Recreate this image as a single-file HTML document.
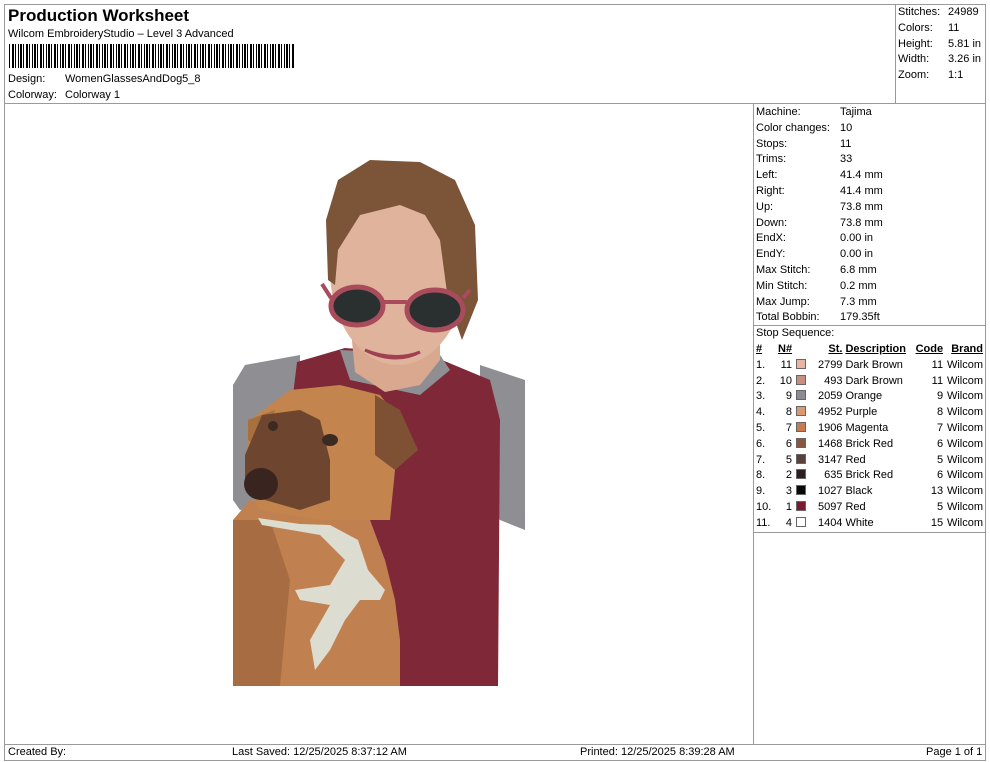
<!DOCTYPE html>
<html><head><meta charset="utf-8"><style>
*{margin:0;padding:0;box-sizing:border-box}
body{width:990px;height:762px;background:#fff;font-family:"Liberation Sans",Arial,sans-serif;font-size:11px;color:#000;position:relative;overflow:hidden}
.a{position:absolute;white-space:nowrap}
.l{position:absolute;background:#9a9a9a}
.t{font-size:17px;font-weight:bold}
table{border-collapse:collapse;font-size:11px}
td{padding:0;height:15.8px;line-height:15.8px;white-space:nowrap}
.sw{display:inline-block;width:10px;height:10px;border:1px solid #666;vertical-align:-1px}
</style></head><body>
<div class="l" style="left:4px;top:4px;width:982px;height:1px"></div>
<div class="l" style="left:4px;top:4px;width:1px;height:757px"></div>
<div class="l" style="left:985px;top:4px;width:1px;height:757px"></div>
<div class="l" style="left:4px;top:103px;width:982px;height:1px"></div>
<div class="l" style="left:895px;top:4px;width:1px;height:100px"></div>
<div class="l" style="left:753px;top:103px;width:1px;height:641px"></div>
<div class="l" style="left:753px;top:325px;width:233px;height:1px"></div>
<div class="l" style="left:753px;top:532px;width:233px;height:1px"></div>
<div class="l" style="left:4px;top:744px;width:982px;height:1px"></div>
<div class="l" style="left:4px;top:760px;width:982px;height:1px"></div>

<div class="a t" style="left:8px;top:6px">Production Worksheet</div>
<div class="a" style="left:8px;top:28px">Wilcom EmbroideryStudio – Level 3 Advanced</div>
<div class="a" style="left:9px;top:44px;width:286px;height:24px;background:repeating-linear-gradient(90deg,#000 0 1px,#fff 1px 3px,#000 3px 5px,#fff 5px 6px,#000 6px 7px,#fff 7px 9px,#000 9px 10px,#fff 10px 11px,#000 11px 13px,#fff 13px 14px)"></div>
<div class="a" style="left:8px;top:73px">Design:</div><div class="a" style="left:65px;top:73px">WomenGlassesAndDog5_8</div>
<div class="a" style="left:8px;top:89px">Colorway:</div><div class="a" style="left:65px;top:89px">Colorway 1</div>

<div class="a" style="left:898px;top:5px;line-height:15.8px">Stitches:<br>Colors:<br>Height:<br>Width:<br>Zoom:</div>
<div class="a" style="left:948px;top:5px;line-height:15.8px">24989<br>11<br>5.81 in<br>3.26 in<br>1:1</div>

<div class="a" style="left:756px;top:105px;line-height:15.8px">Machine:<br>Color changes:<br>Stops:<br>Trims:<br>Left:<br>Right:<br>Up:<br>Down:<br>EndX:<br>EndY:<br>Max Stitch:<br>Min Stitch:<br>Max Jump:<br>Total Bobbin:</div>
<div class="a" style="left:840px;top:105px;line-height:15.8px">Tajima<br>10<br>11<br>33<br>41.4 mm<br>41.4 mm<br>73.8 mm<br>73.8 mm<br>0.00 in<br>0.00 in<br>6.8 mm<br>0.2 mm<br>7.3 mm<br>179.35ft</div>
<div class="a" style="left:756px;top:327px">Stop Sequence:</div>
<table class="a" style="left:756px;top:342px;width:227px">
<tr style="font-weight:bold;text-decoration:underline"><td style="width:22px">#</td><td style="width:18px">N#</td><td colspan="2" style="text-align:right;width:42px">St.</td><td style="padding-left:3px">Description</td><td style="text-align:right">Code</td><td style="text-align:right">Brand</td></tr>
<tr><td>1.</td><td style="text-align:right;padding-right:4px">11</td><td><span class="sw" style="background:#e8b4a4"></span></td><td style="text-align:right">2799</td><td style="padding-left:3px">Dark Brown</td><td style="text-align:right">11</td><td style="text-align:right">Wilcom</td></tr>
<tr><td>2.</td><td style="text-align:right;padding-right:4px">10</td><td><span class="sw" style="background:#c98e80"></span></td><td style="text-align:right">493</td><td style="padding-left:3px">Dark Brown</td><td style="text-align:right">11</td><td style="text-align:right">Wilcom</td></tr>
<tr><td>3.</td><td style="text-align:right;padding-right:4px">9</td><td><span class="sw" style="background:#8c8c96"></span></td><td style="text-align:right">2059</td><td style="padding-left:3px">Orange</td><td style="text-align:right">9</td><td style="text-align:right">Wilcom</td></tr>
<tr><td>4.</td><td style="text-align:right;padding-right:4px">8</td><td><span class="sw" style="background:#d99a70"></span></td><td style="text-align:right">4952</td><td style="padding-left:3px">Purple</td><td style="text-align:right">8</td><td style="text-align:right">Wilcom</td></tr>
<tr><td>5.</td><td style="text-align:right;padding-right:4px">7</td><td><span class="sw" style="background:#c97a50"></span></td><td style="text-align:right">1906</td><td style="padding-left:3px">Magenta</td><td style="text-align:right">7</td><td style="text-align:right">Wilcom</td></tr>
<tr><td>6.</td><td style="text-align:right;padding-right:4px">6</td><td><span class="sw" style="background:#8a5640"></span></td><td style="text-align:right">1468</td><td style="padding-left:3px">Brick Red</td><td style="text-align:right">6</td><td style="text-align:right">Wilcom</td></tr>
<tr><td>7.</td><td style="text-align:right;padding-right:4px">5</td><td><span class="sw" style="background:#5a4038"></span></td><td style="text-align:right">3147</td><td style="padding-left:3px">Red</td><td style="text-align:right">5</td><td style="text-align:right">Wilcom</td></tr>
<tr><td>8.</td><td style="text-align:right;padding-right:4px">2</td><td><span class="sw" style="background:#2a1e1e"></span></td><td style="text-align:right">635</td><td style="padding-left:3px">Brick Red</td><td style="text-align:right">6</td><td style="text-align:right">Wilcom</td></tr>
<tr><td>9.</td><td style="text-align:right;padding-right:4px">3</td><td><span class="sw" style="background:#080808"></span></td><td style="text-align:right">1027</td><td style="padding-left:3px">Black</td><td style="text-align:right">13</td><td style="text-align:right">Wilcom</td></tr>
<tr><td>10.</td><td style="text-align:right;padding-right:4px">1</td><td><span class="sw" style="background:#7a1a30"></span></td><td style="text-align:right">5097</td><td style="padding-left:3px">Red</td><td style="text-align:right">5</td><td style="text-align:right">Wilcom</td></tr>
<tr><td>11.</td><td style="text-align:right;padding-right:4px">4</td><td><span class="sw" style="background:#fff"></span></td><td style="text-align:right">1404</td><td style="padding-left:3px">White</td><td style="text-align:right">15</td><td style="text-align:right">Wilcom</td></tr>
</table>

<svg class="a" style="left:0;top:0" width="990" height="762">
<path d="M233 385 L245 365 L300 355 L300 500 L240 510 L233 500Z" fill="#8f8f93"/>
<path d="M480 365 L525 380 L525 530 L500 520 L480 500Z" fill="#8f8f93"/>
<path d="M297 362 L345 348 L430 355 L490 380 L500 420 L498 686 L300 686 L290 420Z" fill="#7e2838"/>
<path d="M340 350 L350 380 L420 395 L450 370 L440 355Z" fill="#8f8f93"/>
<path d="M350 320 L355 372 L385 392 L420 385 L440 360 L440 320Z" fill="#d9a88e"/>
<ellipse cx="398" cy="270" rx="68" ry="95" fill="#e0b39c"/>
<path d="M328 280 L326 220 L338 180 L370 160 L420 162 L455 180 L475 225 L478 300 L462 340 L448 300 L440 240 L425 215 L400 205 L360 215 L338 250 L335 285Z" fill="#7c5438"/>
<ellipse cx="357" cy="306" rx="26" ry="19" fill="#2a3030" stroke="#a84c5c" stroke-width="5"/>
<ellipse cx="435" cy="310" rx="28" ry="20" fill="#2a3030" stroke="#a84c5c" stroke-width="5"/>
<path d="M383 302 L407 302" stroke="#a84c5c" stroke-width="4"/>
<path d="M322 284 L331 298 M463 298 L470 290" stroke="#a84c5c" stroke-width="4"/>
<path d="M365 350 Q395 365 420 352 Q395 362 365 350Z" fill="#a04050" stroke="#a04050" stroke-width="3"/>
<path d="M233 520 L250 500 L300 510 L370 520 L385 560 L395 600 L400 640 L400 686 L233 686Z" fill="#c08050"/>
<path d="M233 520 L270 520 L290 580 L280 686 L233 686Z" fill="#a86c42"/>
<path d="M250 420 L290 390 L340 385 L380 395 L400 420 L395 470 L390 520 L370 520 L320 520 L260 510 L245 480Z" fill="#c4844e"/>
<path d="M375 395 L400 410 L418 450 L395 470 L375 455Z" fill="#7e5034"/>
<path d="M248 420 L275 410 L260 450 L248 440Z" fill="#a8703c"/>
<path d="M262 415 L300 410 L320 420 L330 460 L330 500 L300 510 L265 500 L245 480 L245 455Z" fill="#6e4630"/>
<ellipse cx="261" cy="484" rx="17" ry="16" fill="#3a2420"/>
<ellipse cx="330" cy="440" rx="8" ry="6" fill="#3a2a22"/>
<ellipse cx="273" cy="426" rx="5" ry="5" fill="#3a2a22"/>
<path d="M258 518 L300 524 L330 525 L358 540 L368 570 L385 590 L380 600 L360 600 L345 620 L330 650 L315 670 L310 640 L330 605 L300 600 L295 590 L330 585 L345 560 L320 535 L262 525Z" fill="#dcdcd0"/>
</svg>

<div class="a" style="left:8px;top:746px">Created By:</div>
<div class="a" style="left:232px;top:746px">Last Saved: 12/25/2025 8:37:12 AM</div>
<div class="a" style="left:580px;top:746px">Printed: 12/25/2025 8:39:28 AM</div>
<div class="a" style="left:926px;top:746px">Page 1 of 1</div>
</body></html>
